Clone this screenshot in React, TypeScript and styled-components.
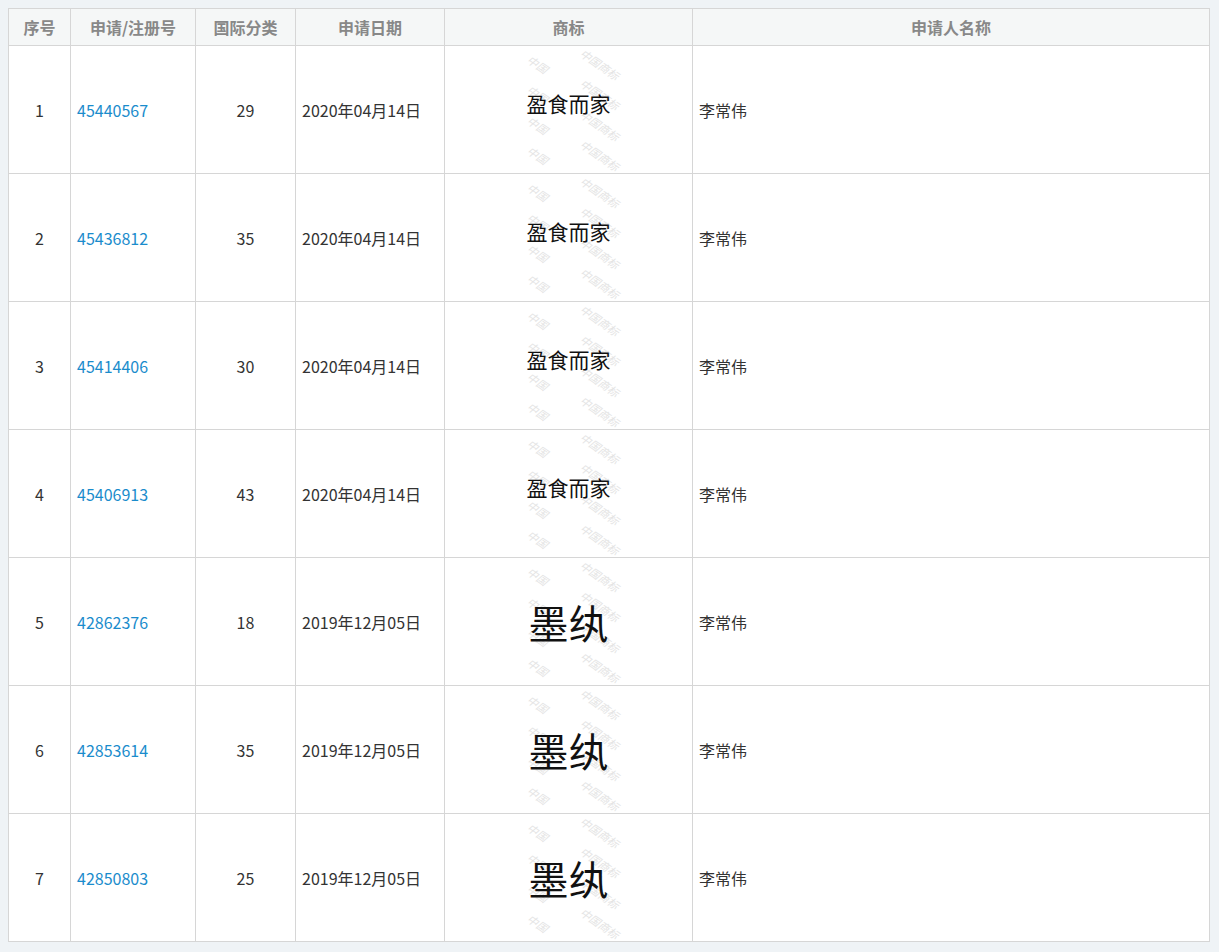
import styled, { createGlobalStyle } from "styled-components";

const Global = createGlobalStyle`
  html, body { margin: 0; background: #eff3f6; }
  body { padding: 8px; font-family: "Noto Sans CJK SC", "Liberation Sans", sans-serif; }
`;

const Table = styled.table`
  border-collapse: collapse;
  width: 1202px;
  background: #fff;
  table-layout: fixed;
  font-size: 16px;
  color: #333;
`;

const Th = styled.th<{ $w?: number }>`
  width: ${(p) => (p.$w ? `${p.$w}px` : "auto")};
  height: 36px;
  background: #f5f7f7;
  color: #888;
  font-weight: bold;
  font-size: 16px;
  border: 1px solid #d6d6d6;
  padding: 0;
`;

const Td = styled.td<{ $align?: string }>`
  height: 127px;
  border: 1px solid #d6d6d6;
  text-align: ${(p) => p.$align || "left"};
  padding: 0 6px;
  vertical-align: middle;
`;

const Link = styled.a`
  color: #1a8ccc;
  text-decoration: none;
`;

const Mark = styled.div`
  position: relative;
  width: 124px;
  height: 122px;
  margin: 0 auto;
  display: flex;
  align-items: center;
  justify-content: center;
`;

const Water = styled.div`
  position: absolute;
  inset: 0;
  display: grid;
  grid-template-columns: repeat(2, 1fr);
  align-content: space-around;
  justify-items: center;
  color: #e4e4e4;
  font-size: 11px;
  font-style: italic;
`;

const WaterItem = styled.span`
  transform: rotate(35deg);
  white-space: nowrap;
`;

const MarkText = styled.span<{ $big: boolean }>`
  position: relative;
  color: #111;
  font-size: ${(p) => (p.$big ? "40px" : "21px")};
  margin-top: ${(p) => (p.$big ? "0" : "-14px")};
`;

const rows = [
  ["45440567", "29", "2020年04月14日", "盈食而家"],
  ["45436812", "35", "2020年04月14日", "盈食而家"],
  ["45414406", "30", "2020年04月14日", "盈食而家"],
  ["45406913", "43", "2020年04月14日", "盈食而家"],
  ["42862376", "18", "2019年12月05日", "墨纨"],
  ["42853614", "35", "2019年12月05日", "墨纨"],
  ["42850803", "25", "2019年12月05日", "墨纨"],
];

export default function App() {
  return (
    <>
      <Global />
      <Table>
        <thead>
          <tr>
            <Th $w={61}>序号</Th>
            <Th $w={124}>申请/注册号</Th>
            <Th $w={99}>国际分类</Th>
            <Th $w={148}>申请日期</Th>
            <Th $w={247}>商标</Th>
            <Th>申请人名称</Th>
          </tr>
        </thead>
        <tbody>
          {rows.map((r, i) => (
            <tr key={i}>
              <Td $align="center">{i + 1}</Td>
              <Td><Link>{r[0]}</Link></Td>
              <Td $align="center">{r[1]}</Td>
              <Td>{r[2]}</Td>
              <Td $align="center">
                <Mark>
                  <Water>
                    {Array.from({ length: 8 }).map((_, k) => (
                      <WaterItem key={k}>{k % 2 ? "中国商标" : "中国"}</WaterItem>
                    ))}
                  </Water>
                  <MarkText $big={r[3] === "墨纨"}>{r[3]}</MarkText>
                </Mark>
              </Td>
              <Td>李常伟</Td>
            </tr>
          ))}
        </tbody>
      </Table>
    </>
  );
}
